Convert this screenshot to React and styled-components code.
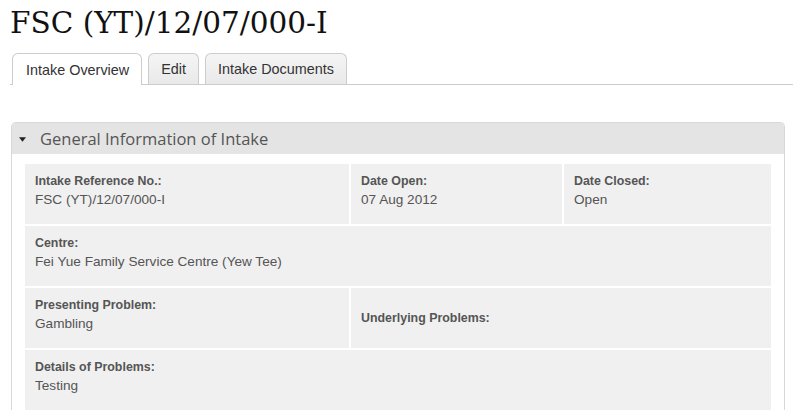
import React from 'react'
import styled, { createGlobalStyle } from 'styled-components'

const GlobalStyle = createGlobalStyle`
  html, body {
    margin: 0;
    padding: 0;
    background: #fff;
    overflow: hidden;
  }
  body {
    font-family: 'Liberation Sans', Arial, sans-serif;
    color: #333;
  }
`

const fields = [
  [
    { label: 'Intake Reference No.:', value: 'FSC (YT)/12/07/000-I', span: 1 },
    { label: 'Date Open:', value: '07 Aug 2012', span: 1 },
    { label: 'Date Closed:', value: 'Open', span: 1 },
  ],
  [{ label: 'Centre:', value: 'Fei Yue Family Service Centre (Yew Tee)', span: 3 }],
  [
    { label: 'Presenting Problem:', value: 'Gambling', span: 1 },
    { label: 'Underlying Problems:', value: '', span: 2, center: true },
  ],
  [{ label: 'Details of Problems:', value: 'Testing', span: 3 }],
]

function App() {
  const tabs = ['Intake Overview', 'Edit', 'Intake Documents']

  return (
    <Page>
      <GlobalStyle />
      <Title>FSC (YT)/12/07/000-I</Title>
      <TabBar>
        {tabs.map((t, i) => (
          <Tab key={t} active={i === 0}>{t}</Tab>
        ))}
      </TabBar>

      <Panel>
        <PanelHeader>
          <Caret viewBox="0 0 8 5" width="7" height="5">
            <path d="M0 0 L8 0 L4 5 Z" fill="#222" />
          </Caret>
          <PanelTitle>General Information of Intake</PanelTitle>
        </PanelHeader>
        <PanelBody>
          <InfoGrid>
            {fields.flat().map((f) => (
              <Cell key={f.label} span={f.span} center={f.center}>
                <Label>{f.label}</Label>
                {f.value && <Value>{f.value}</Value>}
              </Cell>
            ))}
          </InfoGrid>
        </PanelBody>
      </Panel>
    </Page>
  )
}

export default App

const Page = styled.div`
  width: 800px;
  height: 410px;
  padding: 0 7px 0 10px;
  box-sizing: border-box;
`

const Title = styled.h1`
  margin: 0;
  padding-top: 3px;
  height: 50px;
  font-family: 'DejaVu Serif', 'Liberation Serif', serif;
  font-weight: normal;
  font-size: 29.5px;
  line-height: 40px;
  color: #111;
`

const TabBar = styled.div`
  display: flex;
  align-items: flex-end;
  gap: 6px;
  height: 31px;
  padding-left: 2px;
  border-bottom: 1px solid #ccc;
`

const Tab = styled.div`
  box-sizing: border-box;
  padding: 0 12px 0 ${(p) => (p.active ? '13px' : '12px')};
  display: flex;
  align-items: center;
  font-size: 14.4px;
  color: #333;
  border: 1px solid #ccc;
  border-bottom: none;
  border-radius: 6px 6px 0 0;
  background: ${(p) => (p.active ? '#fff' : 'linear-gradient(#f5f5f5, #e9e9e9)')};
  margin-bottom: ${(p) => (p.active ? '-1px' : '0')};
  height: ${(p) => (p.active ? '32px' : '31px')};
`

const Panel = styled.div`
  margin-top: 37px;
  margin-left: 1px;
  width: 772px;
  border: 1px solid #d8d8d8;
  border-bottom: none;
  border-radius: 5px 5px 0 0;
  height: 300px;
`

const PanelHeader = styled.div`
  display: flex;
  align-items: center;
  height: 31px;
  background: #e4e4e4;
  border-radius: 4px 4px 0 0;
`

const Caret = styled.svg`
  margin-left: 7px;
  margin-right: 14px;
  margin-top: 2px;
`

const PanelTitle = styled.span`
  font-family: 'Open Sans', 'Liberation Sans', sans-serif;
  font-size: 16.5px;
  color: #555;
`

const PanelBody = styled.div`
  padding: 10px 13px 0 13px;
`

const InfoGrid = styled.div`
  display: grid;
  grid-template-columns: 324px 211px 1fr;
  grid-auto-rows: 60px;
  gap: 2px;
`

const Cell = styled.div`
  grid-column: span ${(p) => p.span};
  background: #f0f0f0;
  padding: ${(p) => (p.center ? '0 10px' : '10px 10px 0')};
  display: flex;
  flex-direction: column;
  justify-content: ${(p) => (p.center ? 'center' : 'flex-start')};
  gap: 2px;
`

const Label = styled.div`
  font-size: 12.4px;
  font-weight: bold;
  color: #555;
  line-height: 15px;
`

const Value = styled.div`
  font-size: 13.6px;
  color: #555;
  line-height: 17px;
`
